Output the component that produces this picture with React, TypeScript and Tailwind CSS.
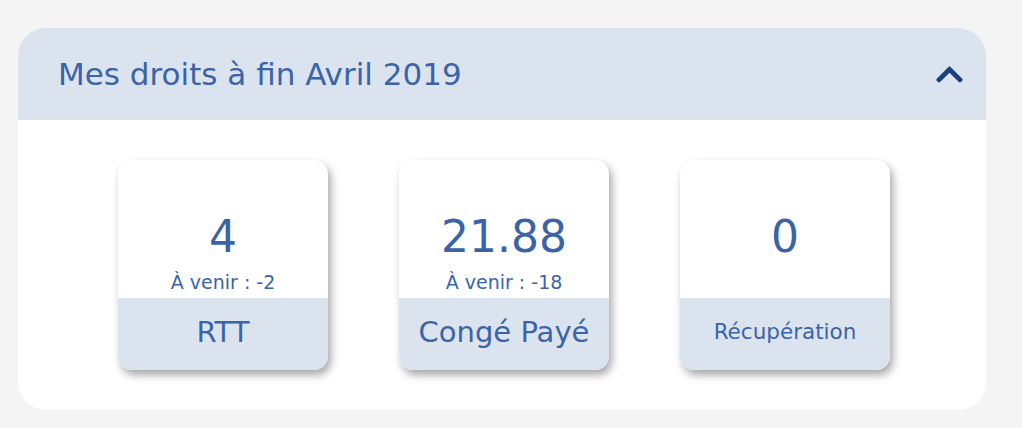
import { FaChevronUp } from "react-icons/fa";

const soldes = [
  { valeur: "4", avenir: "À venir : -2", label: "RTT", small: false },
  { valeur: "21.88", avenir: "À venir : -18", label: "Congé Payé", small: false },
  { valeur: "0", avenir: "", label: "Récupération", small: true },
];

function SoldeCard({ valeur, avenir, label, small }: (typeof soldes)[number]) {
  return (
    <div className="flex h-[210px] w-[210px] flex-col overflow-hidden rounded-[14px] bg-white shadow-[3px_5px_9px_rgba(0,0,0,0.35)]">
      <div className="flex h-[138px] flex-col items-center pt-[55px]">
        <span className="text-[44px] leading-[44px]">{valeur}</span>
        <span className="mt-[12px] h-[22px] text-[19px] leading-[22px]">{avenir}</span>
      </div>
      <div
        className={`flex flex-1 items-center justify-center bg-[#dbe3ef] pb-[3px] ${
          small ? "text-[21.5px]" : "text-[29px]"
        }`}
      >
        {label}
      </div>
    </div>
  );
}

export default function App() {
  return (
    <div
      className="min-h-screen bg-[#f4f4f4] px-[18px] pt-[28px] text-[#3b64a8]"
      style={{ fontFamily: "'DejaVu Sans', Lato, sans-serif" }}
    >
      <div className="w-[968px] overflow-hidden rounded-[28px] bg-white">
        <div className="flex h-[92px] items-center justify-between bg-[#dbe3ef] pl-[40px] pr-[21px]">
          <h2 className="text-[31px] leading-[40px]">Mes droits à fin Avril 2019</h2>
          <FaChevronUp className="text-[#1a3f80]" size={31} />
        </div>
        <div className="flex justify-center gap-[71px] pb-[40px] pl-[4px] pt-[40px]">
          {soldes.map((s) => (
            <SoldeCard key={s.label} {...s} />
          ))}
        </div>
      </div>
    </div>
  );
}
